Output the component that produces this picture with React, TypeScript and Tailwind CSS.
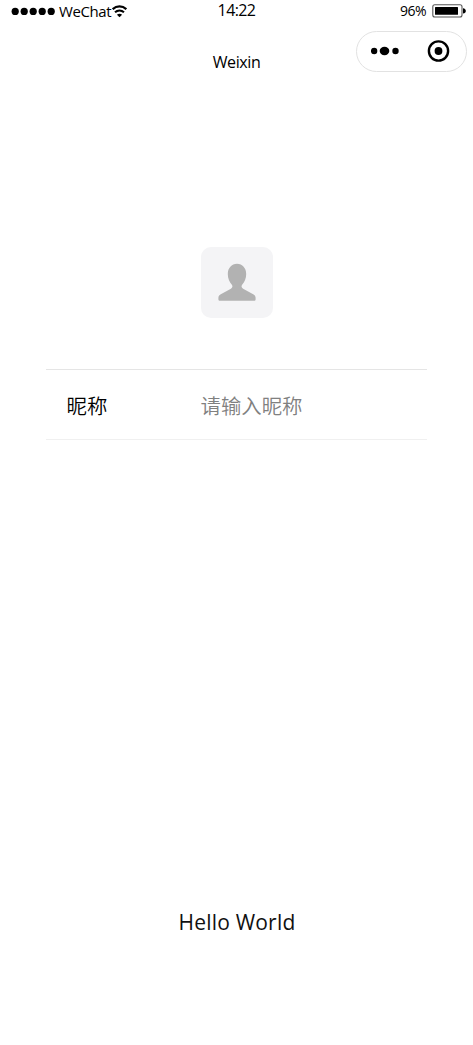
function StatusBar() {
  return (
    <div className="grid h-[22px] grid-cols-3 items-center text-black">
      <div className="flex items-center pl-[11px]">
        <svg width="46" height="8" viewBox="0 0 46 8" className="shrink-0">
          {[4.2, 13.2, 22.2, 31.2, 40.2].map((x) => (
            <circle key={x} cx={x} cy="4.4" r="3.6" />
          ))}
        </svg>
        <span className="ml-[2px] w-[53px] text-[15px] leading-[20px] tracking-[-0.4px] whitespace-nowrap">WeChat</span>
        <svg width="15" height="13" viewBox="0 0 15 13" fill="none" stroke="#000" className="shrink-0">
          <path d="M.7 4.2C4.7.5 10.3.5 14.3 4.2" strokeWidth="2.2" />
          <path d="M3 7.3c2.6-2.3 6.4-2.3 9 0" strokeWidth="2.1" />
          <path d="M4.9 9.7c1.5-1.400 3.700-1.400 5.200 0L7.500 12.300z" fill="#000" stroke="none" />
        </svg>
      </div>
      <div className="pb-px text-center text-[16px] leading-[21px] tracking-[-0.6px]">14:22</div>
      <div className="flex items-center justify-end pr-[7px]">
        <span className="mr-[6px] text-[14px] leading-[22px] tracking-[-0.5px]">96%</span>
        <svg width="34" height="14" viewBox="0 0 34 14">
          <rect x=".8" y=".8" width="29.2" height="12.2" rx="2" fill="#fff" stroke="#555" strokeWidth="1.1" />
          <rect x="3" y="3" width="23" height="7.7" rx=".5" />
          <path d="M31 4.200q2.800.4 2.800 2.800T31 9.600z" />
        </svg>
      </div>
    </div>
  );
}

function NavBar() {
  return (
    <div className="grid h-[60px] grid-cols-3">
      <div />
      <div className="pt-[29px] text-center text-[16px] leading-[22px] tracking-[-0.4px] text-black">Weixin</div>
      <div className="flex justify-end pt-[9px] pr-[6px]">
        <div className="flex h-[41px] w-[111px] items-center rounded-full border border-[#e2e2e2] bg-white">
          <svg width="28" height="10" viewBox="0 0 28 10" className="mb-px ml-[14px]">
            <circle cx="3.1" cy="5" r="3.2" />
            <ellipse cx="13.5" cy="5" rx="4.8" ry="4.2" />
            <circle cx="24.5" cy="5" r="3.2" />
          </svg>
          <svg width="24" height="24" viewBox="0 0 24 24" className="mb-px ml-[27px]">
            <circle cx="12.5" cy="12" r="9.6" fill="none" stroke="#000" strokeWidth="2.4" />
            <circle cx="12.5" cy="12" r="3.9" />
          </svg>
        </div>
      </div>
    </div>
  );
}

export default function App() {
  return (
    <div className="flex h-[1045px] w-[473px] flex-col bg-white font-['Open_Sans','Noto_Sans_CJK_SC',sans-serif]">
      <StatusBar />
      <NavBar />
      <main className="flex flex-col items-center">
        <button className="mt-[165px] flex h-[71px] w-[72px] items-center justify-center rounded-[10px] bg-[#f4f4f6]">
          <svg width="38" height="38" viewBox="0 0 38 38" fill="#b2b2b2" className="mb-px">
            <path d="M19 .8c5.4 0 9.2 4.3 9.2 10.2 0 4.6-1.7 8-3.9 10.6-1.3 1.6-.9 3.1.8 4.1L35.2 31.2c1.7.9 2.4 2.1 2.4 3.7v1.3c0 1-.6 1.6-1.6 1.6H2c-1 0-1.6-.6-1.6-1.6v-1.3c0-1.6.7-2.8 2.4-3.7L12.9 25.7c1.7-1 2.1-2.5.8-4.1C11.5 19 9.8 15.6 9.8 11 9.8 5.1 13.600.8 19 .8z" />
          </svg>
        </button>
        <div className="mt-[51px] flex h-[71px] w-[381px] items-center border-t border-b border-t-[#e5e5e5] border-b-[#f0f0f0] pl-[20.5px] font-['Noto_Sans_CJK_SC',sans-serif] text-[20.4px] font-[350]">
          <label className="w-[134px] pt-px text-black">昵称</label>
          <span className="pt-px text-[#808080]">请输入昵称</span>
        </div>
        <div className="mt-[467px] pl-px text-[21px] leading-[30px] tracking-[0.2px] text-[#111]">Hello World</div>
      </main>
    </div>
  );
}
